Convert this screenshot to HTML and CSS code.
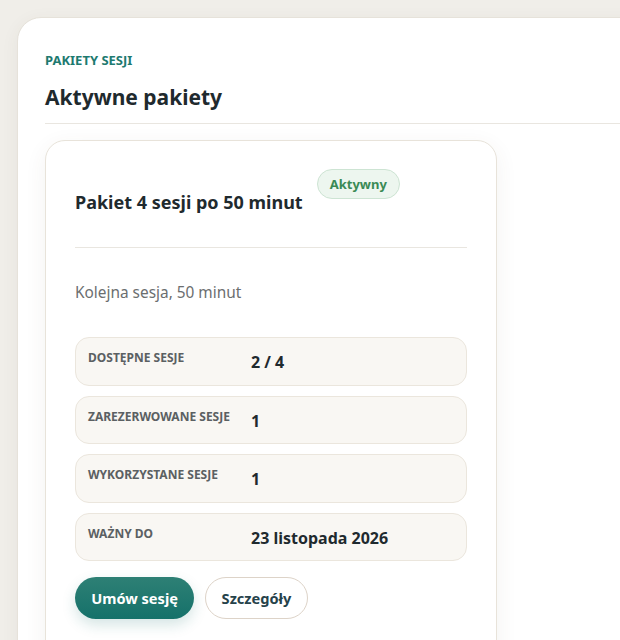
FILE: index.html
```html
<!DOCTYPE html>
<html lang="pl">
<head>
<meta charset="utf-8">
<title>Pakiety sesji</title>
<link rel="stylesheet" href="styles.css">
</head>
<body>
<main class="panel">
  <div class="eyebrow">PAKIETY SESJI</div>
  <h1 class="heading">Aktywne pakiety</h1>
  <section class="card">
    <header class="card-head">
      <h2 class="card-title">Pakiet 4 sesji po 50 minut</h2>
      <span class="badge">Aktywny</span>
    </header>
    <p class="card-sub">Kolejna sesja, 50 minut</p>
    <div class="stats">
      <div class="stat"><span class="stat-label">DOSTĘPNE SESJE</span><span class="stat-value">2 / 4</span></div>
      <div class="stat"><span class="stat-label">ZAREZERWOWANE SESJE</span><span class="stat-value">1</span></div>
      <div class="stat"><span class="stat-label">WYKORZYSTANE SESJE</span><span class="stat-value">1</span></div>
      <div class="stat"><span class="stat-label">WAŻNY DO</span><span class="stat-value">23 listopada 2026</span></div>
    </div>
    <div class="actions">
      <button class="btn btn-primary">Umów sesję</button>
      <button class="btn btn-outline">Szczegóły</button>
    </div>
  </section>
</main>
</body>
</html>
```

FILE: styles.css
```css
html, body {
  margin: 0;
  padding: 0;
  overflow: hidden;
  height: 640px;
}
body {
  background: #f0eee9;
  font-family: "Noto Sans", "Open Sans", sans-serif;
  color: #1f2a2e;
}
.panel {
  box-sizing: border-box;
  margin: 17px 0 0 17px;
  width: 700px;
  height: 700px;
  background: #ffffff;
  border: 1px solid #e6e2da;
  border-radius: 24px;
  padding: 34px 28px 0 27px;
  box-shadow: 0 4px 18px rgba(80, 70, 50, 0.06);
}
.eyebrow {
  font-size: 13px;
  line-height: 16px;
  font-weight: 700;
  color: #1e7a70;
}
.heading {
  margin: 15px 0 0;
  font-size: 21px;
  line-height: 28px;
  font-weight: 700;
  color: #1f2a2e;
  padding-bottom: 12px;
  border-bottom: 1px solid #e9e6e0;
}
.card {
  box-sizing: border-box;
  margin-top: 16px;
  width: 452px;
  height: 600px;
  border: 1px solid #e8e3da;
  border-radius: 20px;
  padding: 28px 29px 0 29px;
  background: #ffffff;
  box-shadow: 0 6px 22px rgba(80, 70, 50, 0.07);
}
.card-head {
  display: flex;
  align-items: flex-start;
  gap: 14px;
  padding-bottom: 33px;
  border-bottom: 1px solid #e9e6e0;
}
.card-title {
  margin: 21px 0 0;
  font-size: 18px;
  line-height: 24px;
  font-weight: 700;
  color: #1f2a2e;
}
.badge {
  box-sizing: border-box;
  height: 30px;
  padding: 0 12px;
  display: inline-flex;
  align-items: center;
  border-radius: 15px;
  background: #edf6ef;
  border: 1px solid #cde4d3;
  color: #3a8a55;
  font-size: 13px;
  font-weight: 700;
}
.card-sub {
  margin: 34px 0 0;
  font-size: 15.4px;
  line-height: 22px;
  color: #6b6e6f;
}
.stats {
  margin-top: 33px;
  display: flex;
  flex-direction: column;
  gap: 10px;
}
.stat {
  box-sizing: border-box;
  height: 48.5px;
  display: grid;
  grid-template-columns: 150px 1fr;
  column-gap: 13px;
  align-items: start;
  padding: 12px 12px;
  background: #f9f7f3;
  border: 1px solid #ebe6dd;
  border-radius: 14px;
}
.stat-label {
  font-size: 12px;
  line-height: 15px;
  font-weight: 700;
  color: #5b6062;
}
.stat-value {
  font-size: 16px;
  line-height: 24px;
  font-weight: 700;
  color: #1f2a2e;
}
.actions {
  margin-top: 16px;
  display: flex;
  gap: 11px;
}
.btn {
  box-sizing: border-box;
  height: 42px;
  border-radius: 21px;
  font-family: "Noto Sans", "Open Sans", sans-serif;
  font-size: 14.6px;
  font-weight: 700;
  cursor: pointer;
  padding: 0;
}
.btn-primary {
  width: 119px;
  border: none;
  color: #ffffff;
  background: linear-gradient(180deg, #2e8075 0%, #15716a 100%);
  box-shadow: 0 6px 14px rgba(21, 113, 106, 0.18);
}
.btn-outline {
  width: 103px;
  background: #ffffff;
  border: 1px solid #ddd3c8;
  color: #26424a;
}
```
